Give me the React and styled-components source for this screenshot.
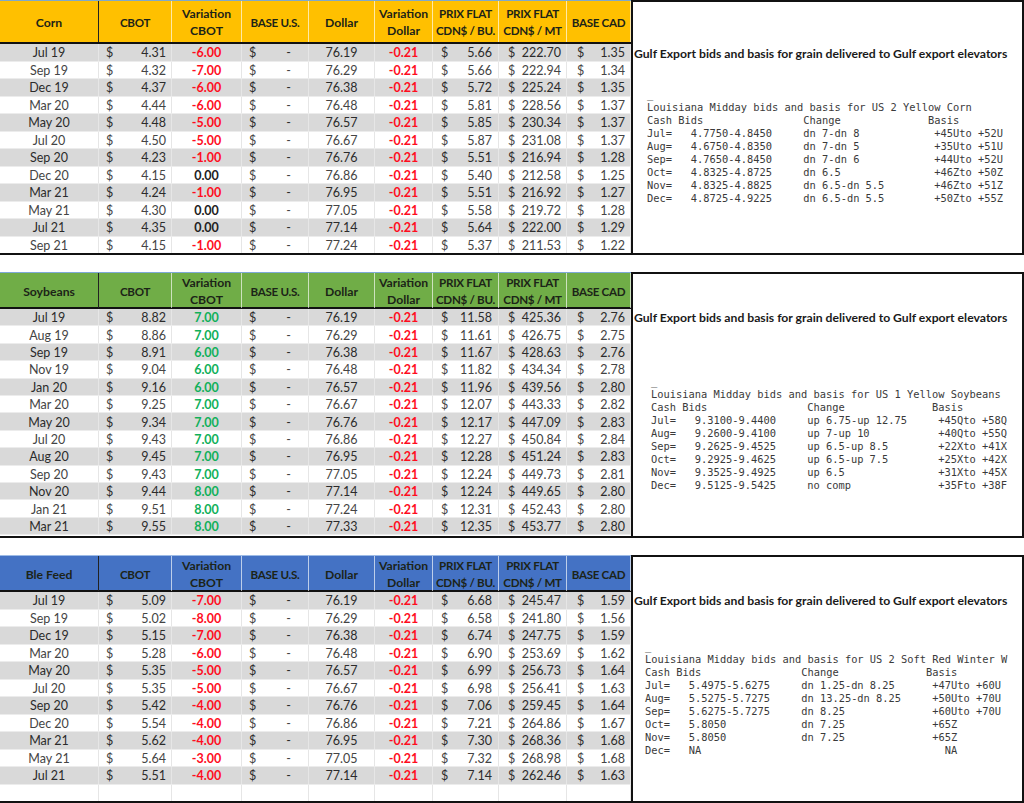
import React from "react";
import styled, { createGlobalStyle } from "styled-components";

const Global = createGlobalStyle`
  html, body { margin: 0; padding: 0; background: #fff; }
  body { font-family: "Lato", "Liberation Sans", sans-serif; color: #333; }
`;

const COLS = "99px 73px 70px 67px 66px 58px 66px 68px 64px";

const Page = styled.div`
  display: flex;
  flex-direction: column;
  gap: 17px;
  width: 1024px;
  height: 803px;
  overflow: hidden;
`;

const Block = styled.section`
  display: flex;
  height: ${(p) => p.$height}px;
  flex: none;
`;

const Table = styled.div`
  width: 631px;
  flex: none;
  display: flex;
  flex-direction: column;
  border-bottom: 2px solid #111;
  box-sizing: border-box;
`;

const HeaderRow = styled.div`
  display: grid;
  grid-template-columns: ${COLS};
  height: ${(p) => p.$height}px;
  flex: none;
  background: ${(p) => p.$color};
  border-top: 1px solid ${(p) => p.$edge};
  border-bottom: 2px solid #111;
  box-sizing: border-box;
`;

const HeaderCell = styled.div`
  display: flex;
  align-items: center;
  justify-content: center;
  text-align: center;
  padding-top: 1px;
  font-weight: 700;
  font-size: ${(p) => (p.$caps ? "11.6px" : "12.2px")};
  letter-spacing: ${(p) => (p.$caps ? "-0.3px" : "0")};
  line-height: 17px;
  color: #1c2418;
  white-space: pre;
  box-sizing: border-box;
  border-right: 1px solid ${(p) => (p.$strong ? "#222" : "rgba(255,255,255,.65)")};
`;

const Rows = styled.div`
  flex: 1;
  min-height: 0;
  overflow: hidden;
`;

const Row = styled.div`
  height: ${(p) => p.$height}px;
  display: grid;
  grid-template-columns: ${COLS};
  background: ${(p) => (p.$shaded ? "#d9d9d9" : "#fff")};
  border-bottom: 1px solid #ececec;
  box-sizing: border-box;
  font-size: 12.5px;
  color: ${(p) => (p.$shaded ? "#2b2b2b" : "#444")};
`;

const Cell = styled.div`
  display: flex;
  align-items: center;
  justify-content: ${(p) => p.$justify || "center"};
  padding: ${(p) => p.$pad || "1px 0 0"};
  box-sizing: border-box;
  border-right: 1px solid #e6e6e6;
  white-space: nowrap;
`;

const Change = styled(Cell)`
  font-weight: 700;
  color: ${(p) => p.$color};
`;

const Dash = styled.span`
  margin-right: 11px;
`;

const Panel = styled.aside`
  flex: 1;
  min-width: 0;
  border: 2px solid #111;
  box-sizing: border-box;
  background: #fff;
  overflow: hidden;
  padding: ${(p) => p.$top}px 0 0 1px;
`;

const PanelTitle = styled.h3`
  margin: 0;
  font-size: 12.2px;
  line-height: 18px;
  font-weight: 700;
  color: #1a1a1a;
  white-space: nowrap;
`;

const Bulletin = styled.pre`
  margin: ${(p) => p.$gap}px 0 0 ${(p) => p.$indent}px;
  font-family: "DejaVu Sans Mono", "Liberation Mono", monospace;
  font-size: 10.38px;
  line-height: 13px;
  color: #3a3a3a;
`;

const corn = [
  ["Jul 19","4.31","-6.00","76.19","5.66","222.70","1.35"],
  ["Sep 19","4.32","-7.00","76.29","5.66","222.94","1.34"],
  ["Dec 19","4.37","-6.00","76.38","5.72","225.24","1.35"],
  ["Mar 20","4.44","-6.00","76.48","5.81","228.56","1.37"],
  ["May 20","4.48","-5.00","76.57","5.85","230.34","1.37"],
  ["Jul 20","4.50","-5.00","76.67","5.87","231.08","1.37"],
  ["Sep 20","4.23","-1.00","76.76","5.51","216.94","1.28"],
  ["Dec 20","4.15","0.00","76.86","5.40","212.58","1.25"],
  ["Mar 21","4.24","-1.00","76.95","5.51","216.92","1.27"],
  ["May 21","4.30","0.00","77.05","5.58","219.72","1.28"],
  ["Jul 21","4.35","0.00","77.14","5.64","222.00","1.29"],
  ["Sep 21","4.15","-1.00","77.24","5.37","211.53","1.22"],
];
const soy = [
  ["Jul 19","8.82","7.00","76.19","11.58","425.36","2.76"],
  ["Aug 19","8.86","7.00","76.29","11.61","426.75","2.75"],
  ["Sep 19","8.91","6.00","76.38","11.67","428.63","2.76"],
  ["Nov 19","9.04","6.00","76.48","11.82","434.34","2.78"],
  ["Jan 20","9.16","6.00","76.57","11.96","439.56","2.80"],
  ["Mar 20","9.25","7.00","76.67","12.07","443.33","2.82"],
  ["May 20","9.34","7.00","76.76","12.17","447.09","2.83"],
  ["Jul 20","9.43","7.00","76.86","12.27","450.84","2.84"],
  ["Aug 20","9.45","7.00","76.95","12.28","451.24","2.83"],
  ["Sep 20","9.43","7.00","77.05","12.24","449.73","2.81"],
  ["Nov 20","9.44","8.00","77.14","12.24","449.65","2.80"],
  ["Jan 21","9.51","8.00","77.24","12.31","452.43","2.80"],
  ["Mar 21","9.55","8.00","77.33","12.35","453.77","2.80"],
];
const ble = [
  ["Jul 19","5.09","-7.00","76.19","6.68","245.47","1.59"],
  ["Sep 19","5.02","-8.00","76.29","6.58","241.80","1.56"],
  ["Dec 19","5.15","-7.00","76.38","6.74","247.75","1.59"],
  ["Mar 20","5.28","-6.00","76.48","6.90","253.69","1.62"],
  ["May 20","5.35","-5.00","76.57","6.99","256.73","1.64"],
  ["Jul 20","5.35","-5.00","76.67","6.98","256.41","1.63"],
  ["Sep 20","5.42","-4.00","76.76","7.06","259.45","1.64"],
  ["Dec 20","5.54","-4.00","76.86","7.21","264.86","1.67"],
  ["Mar 21","5.62","-4.00","76.95","7.30","268.36","1.68"],
  ["May 21","5.64","-3.00","77.05","7.32","268.98","1.68"],
  ["Jul 21","5.51","-4.00","77.14","7.14","262.46","1.63"],
  ["","","","","","",""],
];

const bulletinCorn = `_
Louisiana Midday bids and basis for US 2 Yellow Corn
Cash Bids                Change              Basis
Jul=   4.7750-4.8450     dn 7-dn 8            +45Uto +52U
Aug=   4.6750-4.8350     dn 7-dn 5            +35Uto +51U
Sep=   4.7650-4.8450     dn 7-dn 6            +44Uto +52U
Oct=   4.8325-4.8725     dn 6.5               +46Zto +50Z
Nov=   4.8325-4.8825     dn 6.5-dn 5.5        +46Zto +51Z
Dec=   4.8725-4.9225     dn 6.5-dn 5.5        +50Zto +55Z`;

const bulletinSoy = `_
Louisiana Midday bids and basis for US 1 Yellow Soybeans
Cash Bids                Change              Basis
Jul=   9.3100-9.4400     up 6.75-up 12.75     +45Qto +58Q
Aug=   9.2600-9.4100     up 7-up 10           +40Qto +55Q
Sep=   9.2625-9.4525     up 6.5-up 8.5        +22Xto +41X
Oct=   9.2925-9.4625     up 6.5-up 7.5        +25Xto +42X
Nov=   9.3525-9.4925     up 6.5               +31Xto +45X
Dec=   9.5125-9.5425     no comp              +35Fto +38F`;

const bulletinBle = `_
Louisiana Midday bids and basis for US 2 Soft Red Winter W
Cash Bids                Change              Basis
Jul=   5.4975-5.6275     dn 1.25-dn 8.25      +47Uto +60U
Aug=   5.5275-5.7275     dn 13.25-dn 8.25     +50Uto +70U
Sep=   5.6275-5.7275     dn 8.25              +60Uto +70U
Oct=   5.8050            dn 7.25              +65Z
Nov=   5.8050            dn 7.25              +65Z
Dec=   NA                                       NA`;

const changeColor = (v) => {
  if (v.startsWith("-")) return "#ff0d1e";
  if (v === "0.00") return "#222";
  return "#10b05a";
};

const Money = ({ value, pad }) => (
  <Cell $justify="space-between" $pad={pad}>
    {value && <span>$</span>}
    <span>{value}</span>
  </Cell>
);

const Market = ({ name, color, edge, height, headerHeight, rowHeight, rows, panelTop, gap, indent, text }) => (
  <Block $height={height}>
    <Table>
      <HeaderRow $color={color} $edge={edge} $height={headerHeight}>
        <HeaderCell $strong>{name}</HeaderCell>
        <HeaderCell $caps>CBOT</HeaderCell>
        <HeaderCell>{"Variation\nCBOT"}</HeaderCell>
        <HeaderCell $caps>BASE U.S.</HeaderCell>
        <HeaderCell>Dollar</HeaderCell>
        <HeaderCell>{"Variation\nDollar"}</HeaderCell>
        <HeaderCell $caps>{"PRIX FLAT\nCDN$ / BU."}</HeaderCell>
        <HeaderCell $caps>{"PRIX FLAT\nCDN$ / MT"}</HeaderCell>
        <HeaderCell $caps>BASE CAD</HeaderCell>
      </HeaderRow>
      <Rows>
        {rows.map((r, i) => (
          <Row key={i} $height={rowHeight} $shaded={r[0] !== "" && i % 2 === 0}>
            <Cell>{r[0]}</Cell>
            <Money value={r[1]} pad="1px 5px 0 7px" />
            <Change $color={changeColor(r[2])}>{r[2]}</Change>
            <Cell $justify="space-between" $pad="1px 6px 0 7px">
              {r[0] && <span>$</span>}
              {r[0] && <Dash>-</Dash>}
            </Cell>
            <Cell>{r[3]}</Cell>
            <Change $color="#ff0d1e">{r[0] && "-0.21"}</Change>
            <Money value={r[4]} pad="1px 6px 0 8px" />
            <Money value={r[5]} pad="1px 5px 0 9px" />
            <Money value={r[6]} pad="1px 5px 0 10px" />
          </Row>
        ))}
      </Rows>
    </Table>
    <Panel $top={panelTop}>
      <PanelTitle>Gulf Export bids and basis for grain delivered to Gulf export elevators</PanelTitle>
      <Bulletin $gap={gap} $indent={indent}>{text}</Bulletin>
    </Panel>
  </Block>
);

export default function App() {
  return (
    <>
      <Global />
      <Page>
        <Market name="Corn" color="#ffc000" edge="#7fa9c9" height={255} headerHeight={44} rowHeight={17.5} rows={corn}
          panelTop={43} gap={25} indent={13} text={bulletinCorn} />
        <Market name="Soybeans" color="#70ad47" edge="#7fa9d9" height={266} headerHeight={37} rowHeight={17.42} rows={soy}
          panelTop={35} gap={48} indent={17} text={bulletinSoy} />
        <Market name="Ble Feed" color="#4472c4" edge="#9dbbe6" height={248} headerHeight={37} rowHeight={17.5} rows={ble}
          panelTop={35} gap={30} indent={11} text={bulletinBle} />
      </Page>
    </>
  );
}
